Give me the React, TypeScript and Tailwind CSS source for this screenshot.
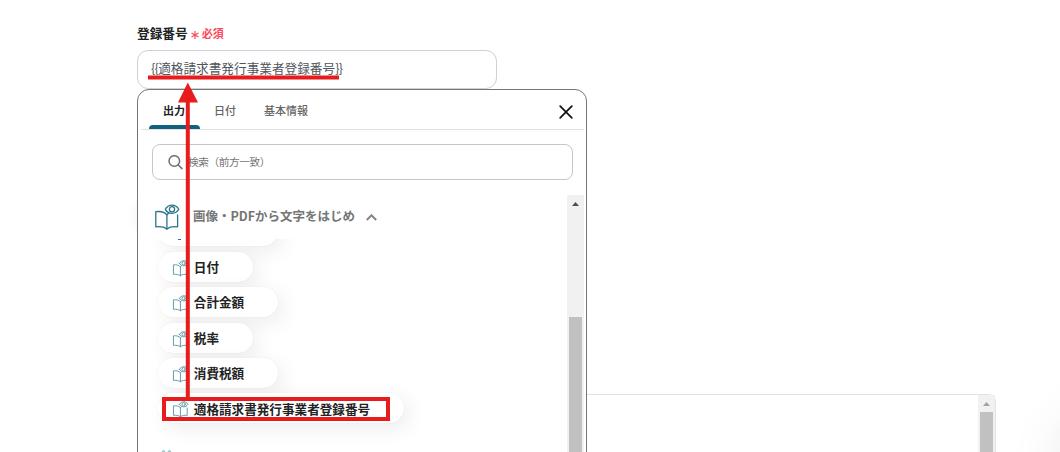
import React, { useState } from "react";

const outputs = ["日付", "合計金額", "税率", "消費税額", "適格請求書発行事業者登録番号"];
const tabs = ["出力", "日付", "基本情報"];

const BookIcon: React.FC<{ className: string; strokeWidth?: number }> = ({ className, strokeWidth = 1.3 }) => (
  <svg viewBox="0 0 26 27" fill="none" stroke="#26758c" strokeWidth={strokeWidth} strokeLinecap="round" strokeLinejoin="round" className={className}>
    <path d="M12.9 10.8C10.5 7.8 6 7.2 1.8 7.7V22.8C6 22.4 10.5 23 12.9 25C15.3 23 19.3 22.4 23.6 22.8V11" />
    <path d="M12.9 10.8V25M12.9 10.8L14.5 9.3" />
    <path d="M11.3 5.3C14.4 -.3 21.8 -.3 24.8 5.3C21.8 10.6 14.4 10.6 11.3 5.3Z" />
    <circle cx="18" cy="5.2" r="2.6" />
  </svg>
);

const Pill: React.FC<{ label: string }> = ({ label }) => (
  <div className="flex h-[30px] items-center rounded-full bg-white pr-[33.6px] pl-[13.8px] shadow-[6px_6px_20px_rgba(0,0,0,0.07),0_0_2px_rgba(0,0,0,0.06)]">
    <BookIcon className="mt-[3px] mr-[5px] h-[17px] w-[17px] opacity-75" strokeWidth={1.5} />
    <span className="pt-[0.6px] text-[12.6px] leading-[18px] font-bold text-[#222]">{label}</span>
  </div>
);

const App: React.FC = () => {
  const [active, setActive] = useState(0);

  return (
    <div className="relative h-[452px] w-[1060px] overflow-hidden bg-white pl-[137px] font-['Noto_Sans_CJK_JP',sans-serif] text-[#222]">
      {/* soft shadows of the surrounding cards */}
      <div className="absolute top-[200px] left-[138px] h-8 w-10 rounded-full shadow-[0_0_16px_rgba(0,0,0,0.08)]" />
      <div className="absolute top-[420px] left-[1062px] h-20 w-20 rounded-full shadow-[0_0_60px_rgba(0,0,0,0.11)]" />

      {/* message area behind the popup */}
      <div className="absolute top-[394px] left-[560px] flex h-[70px] w-[436px] justify-end rounded-tr-lg border-t border-r border-[#e2e2e2]">
        <div className="flex w-[17px] flex-col items-center bg-[#f1f1f1]">
          <svg viewBox="0 0 7 4" className="mt-[7px] h-1 w-[7px] shrink-0" fill="#a3a3a3">
            <path d="M3.5 0L7 4H0Z" />
          </svg>
          <div className="mt-1.5 w-[13px] flex-1 bg-[#c1c1c1]" />
        </div>
      </div>

      <div className="flex h-[50px] items-end pb-[8px] text-[12.7px] leading-[18px] font-bold">
        <span>登録番号</span>
        <svg viewBox="0 0 8 8" className="mb-[3px] ml-[3px] h-2 w-2" stroke="#fb4a5c" strokeWidth="1.2" fill="none">
          <path d="M4 0V8M.5 2L7.5 6M7.5 2L.5 6" />
        </svg>
        <span className="ml-[3px] text-[11px] text-[#fb4a5c]">必須</span>
      </div>

      <div className="flex h-[39px] w-[360px] items-center rounded-[11px] border border-[#ced0da] pb-[3.5px] pl-[13px] text-[12.65px] text-[#50545c]">
        <span className="tracking-[-0.7px]">{"{{"}</span>
        <span>適格請求書発行事業者登録番号</span>
        <span className="tracking-[-0.7px]">{"}}"}</span>
      </div>

      <div className="relative h-[380px] w-[450px] rounded-t-xl border border-[#757575] bg-white">
        <div className="mr-[2px] ml-[3px] flex h-10 border-b border-[#e2e2e2] pl-2 text-[11px] font-medium">
          {tabs.map((tab, i) => (
            <button
              key={tab}
              onClick={() => setActive(i)}
              className={
                active === i
                  ? "relative h-10 pr-[15px] pl-3.5 pt-px font-bold text-[#222] after:absolute after:bottom-px after:left-0 after:h-1 after:w-[51px] after:rounded-t after:bg-[#10617e]"
                  : "h-10 px-3.5 pt-px text-[#666]"
              }
            >
              {tab}
            </button>
          ))}
          <button className="mr-[11px] ml-auto pt-[5px]" aria-label="閉じる">
            <svg viewBox="0 0 14 14" className="h-3.5 w-3.5" stroke="#111" strokeWidth="1.7" strokeLinecap="round">
              <path d="M1.2 1.2L12.8 12.8M12.8 1.2L1.2 12.8" />
            </svg>
          </button>
        </div>

        <div className="mt-3.5 ml-3.5 flex h-9 w-[421px] items-center rounded-lg border border-[#c6c6c6] pl-[15px] text-[10.7px] text-[#777]">
          <svg viewBox="0 0 15 15" className="mr-[5px] h-[15px] w-[15px]" fill="none" stroke="#707070" strokeWidth="1.5" strokeLinecap="round">
            <circle cx="6.3" cy="6" r="5.3" />
            <path d="M10.3 10L14 13.6" />
          </svg>
          <span className="pt-px tracking-[-0.45px]">検索（前方一致）</span>
        </div>

        <div className="mt-[15px] mr-[2px] flex h-[270px]">
          <div className="flex-1 overflow-hidden">
            <div className="relative z-10 flex h-11 items-center bg-white pl-4 text-[12.5px] font-bold text-[#757575]">
              <BookIcon className="mr-[13px] h-[27px] w-[26px]" />
              <span className="pb-px">画像・PDFから文字をはじめ</span>
              <svg viewBox="0 0 11 7" className="ml-[11px] h-[7px] w-[11px]" fill="none" stroke="#858585" strokeWidth="2">
                <path d="M.8 6L5.5 1.3L10.2 6" />
              </svg>
            </div>
            <div className="-mt-[22.6px] flex flex-col items-start gap-[5.4px] pl-5">
              <div className="h-[30px] w-[120px] rounded-full bg-white pl-[20px] shadow-[6px_6px_20px_rgba(0,0,0,0.07),0_0_2px_rgba(0,0,0,0.06)]">
                <div className="pt-[23px]">
                  <div className="h-px w-[3px] bg-[#26758c]" />
                </div>
              </div>
              {outputs.map((label) => (
                <Pill key={label} label={label} />
              ))}
            </div>
            <div className="mt-[26px] pl-[23px]">
              <svg viewBox="0 0 12 12" className="h-3 w-3" fill="none" stroke="#8fc3cd" strokeWidth="1.2">
                <path d="M1 3L2.5 1.5L4 3M7 3L8.5 1.5L10 3" />
              </svg>
            </div>
          </div>
          <div className="flex w-[17px] flex-col items-center bg-[#f1f1f1]">
            <svg viewBox="0 0 7 4" className="mt-[7px] h-1 w-[7px] shrink-0" fill="#505050">
              <path d="M3.5 0L7 4H0Z" />
            </svg>
            <div className="mt-[111px] w-[13px] flex-1 bg-[#c1c1c1]" />
          </div>
        </div>
      </div>

      {/* annotations */}
      <svg viewBox="0 0 1060 452" className="pointer-events-none absolute top-0 left-0 z-20 h-[452px] w-[1060px]" fill="none" stroke="#e81c1c" strokeWidth="4">
        <path d="M148 77.5H339" />
        <path d="M187.8 102V398" />
        <path d="M187.8 82.5L198 102.5H178Z" fill="#e81c1c" stroke="none" />
        <rect x="164" y="399" width="224" height="20" />
      </svg>
    </div>
  );
};

export default App;
